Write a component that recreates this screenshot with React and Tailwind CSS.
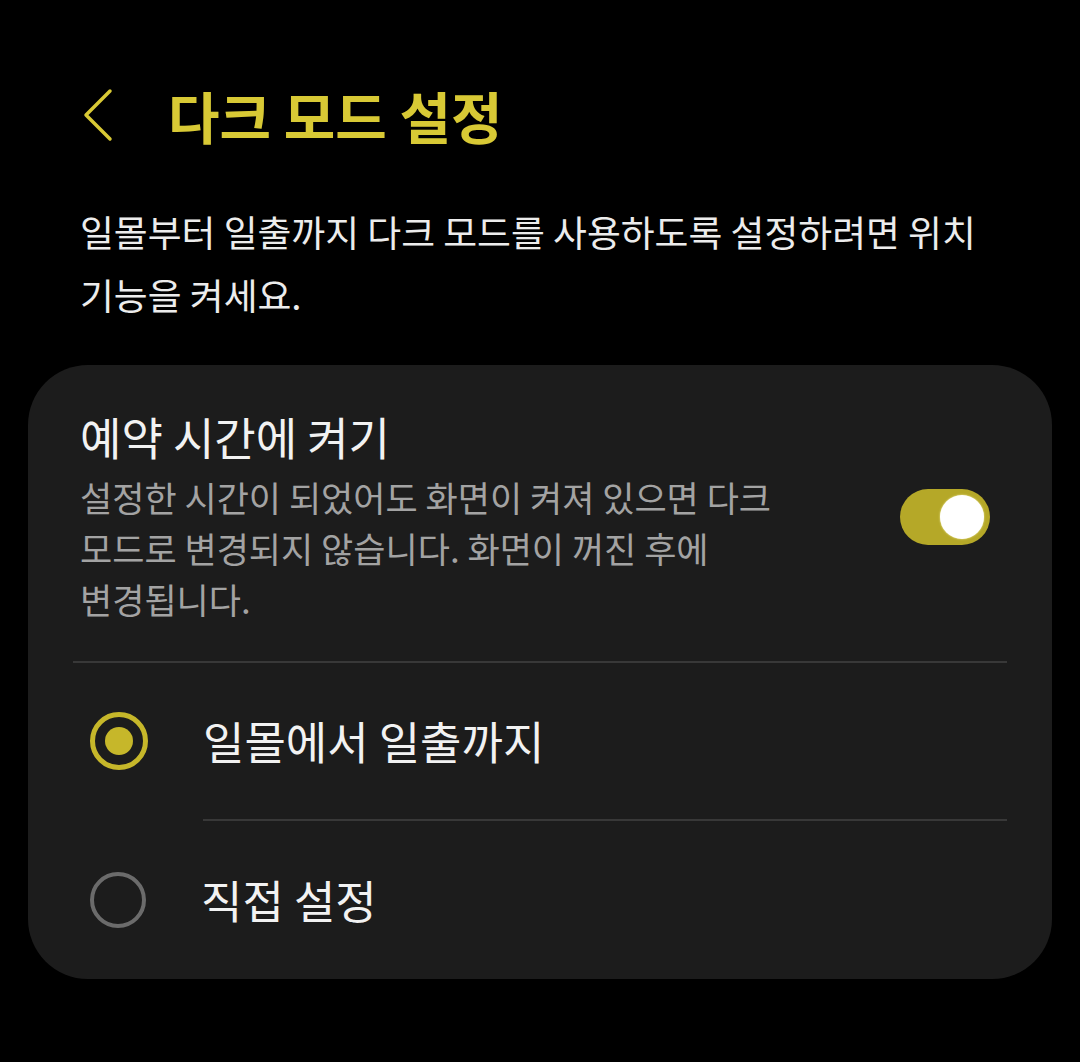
import React from "react";

const font = { fontFamily: '"Noto Sans CJK KR", "Noto Sans", sans-serif' };

function BackIcon() {
  return (
    <svg width="32" height="54" viewBox="0 0 32 54" fill="none">
      <path d="M28 3 L4 27 L28 51" stroke="#d8c935" strokeWidth="3.5" strokeLinecap="round" strokeLinejoin="round" />
    </svg>
  );
}

function Toggle() {
  return (
    <div className="w-[90px] h-[56px] rounded-full bg-[#b5a828] flex items-center justify-end pr-[6px] shrink-0">
      <div className="w-[44px] h-[44px] rounded-full bg-white shadow-[0_0_2px_#f5f0b0]" />
    </div>
  );
}

function Radio({ checked }) {
  return checked ? (
    <div className="w-[58px] h-[58px] rounded-full border-[5px] border-[#c6b72a] flex items-center justify-center shrink-0">
      <div className="w-[28px] h-[28px] rounded-full bg-[#c6b72a]" />
    </div>
  ) : (
    <div className="w-[56px] h-[56px] rounded-full border-[4px] border-[#6b6b6b] shrink-0" />
  );
}

export default function App() {
  return (
    <div className="min-h-[1062px] w-[1080px] bg-black break-keep" style={font}>
      <div className="pt-[80px] h-[150px] flex items-center">
        <div className="ml-[82px] flex items-center">
          <BackIcon />
        </div>
        <h1 className="ml-[54px] text-[56px] leading-[70px] font-bold text-[#d8c935]">다크 모드 설정</h1>
      </div>

      <p className="mt-[50px] px-[80px] text-[36.8px] leading-[63px] text-[#ececec]">
        일몰부터 일출까지 다크 모드를 사용하도록 설정하려면 위치 기능을 켜세요.
      </p>

      <div className="mt-[39px] mx-[28px] rounded-[60px] bg-[#1c1c1c] overflow-hidden">
        <div className="flex items-center pl-[52px] pr-[62px] pt-[44px] pb-[37px]">
          <div className="flex-1">
            <div className="text-[45px] leading-[56px] text-[#f2f2f2]">예약 시간에 켜기</div>
            <div className="mt-[6px] max-w-[740px] text-[35px] leading-[51px] text-[#a3a3a3]">
              설정한 시간이 되었어도 화면이 켜져 있으면 다크 모드로 변경되지 않습니다. 화면이 꺼진 후에 변경됩니다.
            </div>
          </div>
          <Toggle />
        </div>

        <div className="mx-[45px] h-[2px] bg-[#383838]" />

        <div className="h-[156px] flex items-center pl-[62px] gap-[55px]">
          <Radio checked />
          <span className="text-[45px] text-[#f2f2f2]">일몰에서 일출까지</span>
        </div>

        <div className="ml-[175px] mr-[45px] h-[2px] bg-[#383838]" />

        <div className="h-[158px] flex items-center pl-[62px] gap-[55px]">
          <Radio />
          <span className="text-[45px] text-[#f2f2f2]">직접 설정</span>
        </div>
      </div>
    </div>
  );
}
